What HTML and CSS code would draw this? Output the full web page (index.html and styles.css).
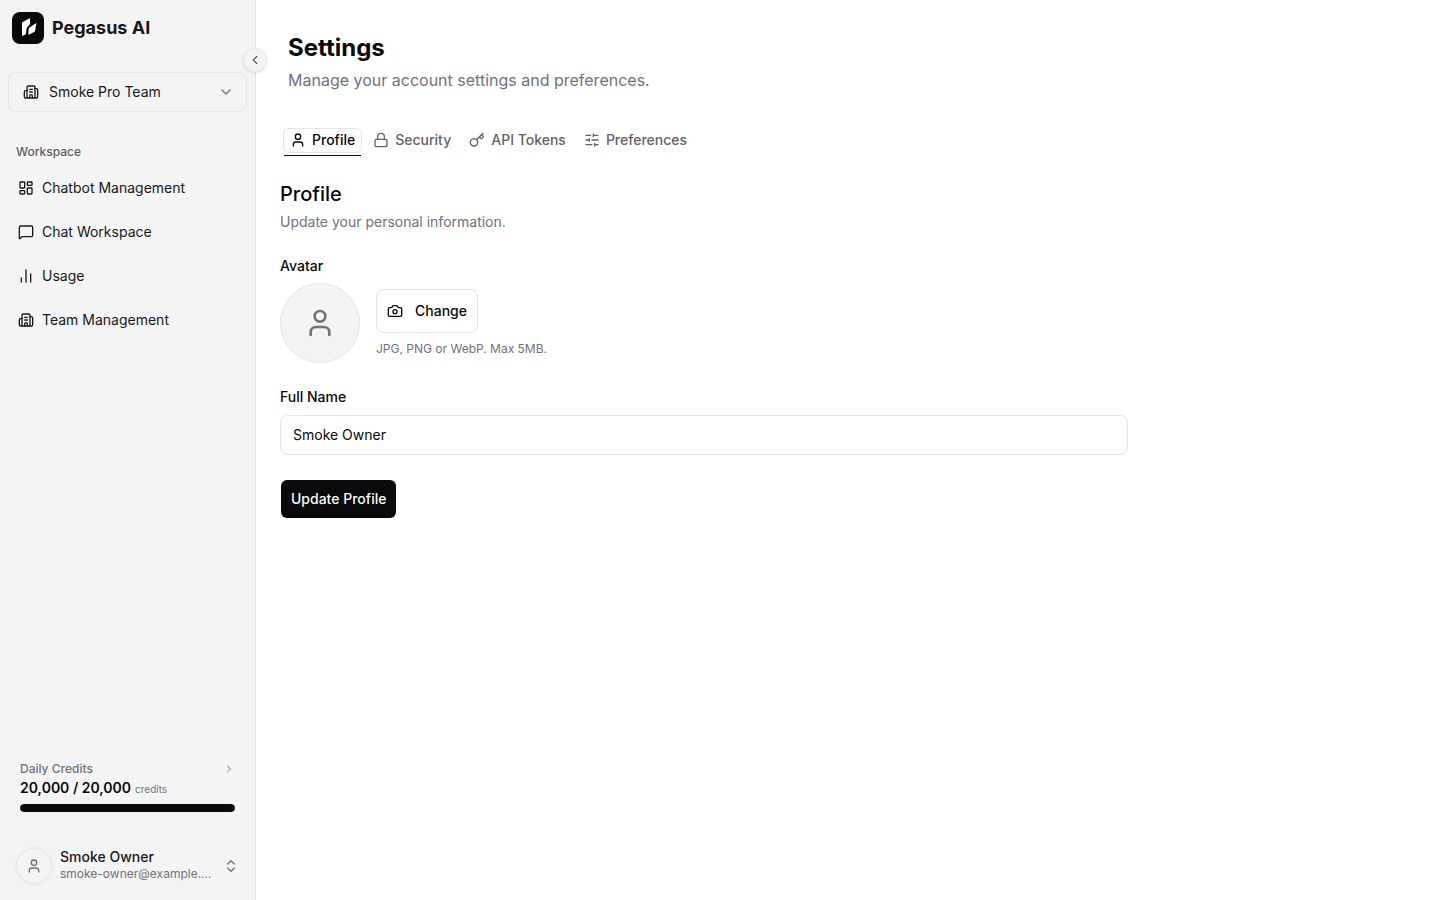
FILE: index.html
```html
<!DOCTYPE html>
<html lang="en">
<head>
<meta charset="utf-8">
<meta name="viewport" content="width=device-width, initial-scale=1">
<title>Settings - Pegasus AI</title>
<link rel="stylesheet" href="styles.css">
</head>
<body>
<svg class="sprite" aria-hidden="true">
  <symbol id="person" viewBox="0 0 24 24"><path d="M19 21v-2a4 4 0 0 0-4-4H9a4 4 0 0 0-4 4v2"/><circle cx="12" cy="7" r="4"/></symbol>
  <symbol id="building" viewBox="0 0 24 24"><path d="M10 12h4M10 8h4M14 21v-3a2 2 0 0 0-4 0v3"/><path d="M6 10H4a2 2 0 0 0-2 2v7a2 2 0 0 0 2 2h16a2 2 0 0 0 2-2V9a2 2 0 0 0-2-2h-2"/><path d="M6 21V5a2 2 0 0 1 2-2h8a2 2 0 0 1 2 2v16"/></symbol>
</svg>
<div class="app">
  <aside class="sidebar">
    <button class="collapse" type="button" aria-label="Collapse sidebar"><svg class="icon icon-sm" viewBox="0 0 24 24"><path d="m15 18-6-6 6-6"/></svg></button>
    <div class="brand">
      <svg class="logo" viewBox="0 0 32 32" aria-hidden="true"><rect width="32" height="32" rx="8" fill="#09090b"/><path d="M10 10.4 18 6v6l-3.300 4L13.700 22.600 10 24Z" fill="#fff"/><path d="M24.400 11 23 19.400 16.300 23l.5-7Z" fill="#fff"/></svg>
      <span>Pegasus AI</span>
    </div>
    <button class="team" type="button">
      <svg class="icon"><use href="#building"/></svg>
      <span>Smoke Pro Team</span>
      <svg class="icon muted end" viewBox="0 0 24 24"><path d="m6 9 6 6 6-6"/></svg>
    </button>
    <nav class="nav" aria-labelledby="nav-title">
      <h2 class="nav-title" id="nav-title">Workspace</h2>
      <a class="nav-link" href="#chatbots"><svg class="icon" viewBox="0 0 24 24"><rect width="7" height="9" x="3" y="3" rx="1"/><rect width="7" height="5" x="14" y="3" rx="1"/><rect width="7" height="9" x="14" y="12" rx="1"/><rect width="7" height="5" x="3" y="16" rx="1"/></svg>Chatbot Management</a>
      <a class="nav-link" href="#chat"><svg class="icon" viewBox="0 0 24 24"><path d="M22 17a2 2 0 0 1-2 2H6.800a2 2 0 0 0-1.400.6l-2.200 2.200A.7.7 0 0 1 2 21.300V5a2 2 0 0 1 2-2h16a2 2 0 0 1 2 2z"/></svg>Chat Workspace</a>
      <a class="nav-link" href="#usage"><svg class="icon" viewBox="0 0 24 24"><path d="M5 21v-6M12 21V3M19 21V9"/></svg>Usage</a>
      <a class="nav-link" href="#team"><svg class="icon"><use href="#building"/></svg>Team Management</a>
    </nav>
    <a class="credits" href="#credits">
      <span class="credits-head" id="credits-label">Daily Credits<svg class="icon icon-xs" viewBox="0 0 24 24"><path d="m9 18 6-6-6-6"/></svg></span>
      <span class="credits-value"><strong>20,000 / 20,000</strong> <small>credits</small></span>
      <span class="meter" role="progressbar" aria-labelledby="credits-label" aria-valuemin="0" aria-valuemax="20000" aria-valuenow="20000"><span class="meter-fill" style="width: 100%"></span></span>
    </a>
    <button class="account" type="button">
      <span class="account-avatar"><svg class="icon muted"><use href="#person"/></svg></span>
      <span class="account-text"><span class="account-name">Smoke Owner</span><span class="account-mail">smoke-owner@example.…</span></span>
      <svg class="icon muted" viewBox="0 0 24 24"><path d="m7 15 5 5 5-5M7 9l5-5 5 5"/></svg>
    </button>
  </aside>
  <main class="main">
    <header class="page-head">
      <h1>Settings</h1>
      <p>Manage your account settings and preferences.</p>
    </header>
    <div class="tabs" role="tablist">
      <button class="tab active" type="button" role="tab" aria-selected="true"><svg class="icon"><use href="#person"/></svg>Profile</button>
      <button class="tab" type="button" role="tab" aria-selected="false"><svg class="icon" viewBox="0 0 24 24"><rect width="18" height="11" x="3" y="11" rx="2"/><path d="M7 11V7a5 5 0 0 1 10 0v4"/></svg>Security</button>
      <button class="tab" type="button" role="tab" aria-selected="false"><svg class="icon" viewBox="0 0 24 24"><path d="m15.500 7.500 2.300 2.300a1 1 0 0 0 1.400 0l2.100-2.100a1 1 0 0 0 0-1.400L19 4M21 2l-9.600 9.600"/><circle cx="7.500" cy="15.500" r="5.500"/></svg>API Tokens</button>
      <button class="tab" type="button" role="tab" aria-selected="false"><svg class="icon" viewBox="0 0 24 24"><path d="M10 5H3M12 19H3M14 3v4M16 17v4M21 12h-9M21 19h-5M21 5h-7M8 10v4M8 12H3"/></svg>Preferences</button>
    </div>
    <form class="profile">
      <h2>Profile</h2>
      <p class="lead">Update your personal information.</p>
      <h3 class="label">Avatar</h3>
      <div class="avatar-row">
        <div class="avatar"><svg class="icon icon-lg muted"><use href="#person"/></svg></div>
        <div class="avatar-side">
          <button class="change" type="button"><svg class="icon" viewBox="0 0 24 24"><path d="M14 4a2 2 0 0 1 1.760 1.050l.486.9A2 2 0 0 0 18 7h2a2 2 0 0 1 2 2v9a2 2 0 0 1-2 2H4a2 2 0 0 1-2-2V9a2 2 0 0 1 2-2h2a2 2 0 0 0 1.760-1.050l.489-.904A2 2 0 0 1 10 4z"/><circle cx="12" cy="13" r="3"/></svg>Change</button>
          <p class="hint">JPG, PNG or WebP. Max 5MB.</p>
        </div>
      </div>
      <label class="label" for="full-name">Full Name</label>
      <input class="input" id="full-name" type="text" value="Smoke Owner">
      <button class="submit" type="submit">Update Profile</button>
    </form>
  </main>
</div>
</body>
</html>
```
FILE: styles.css
```css
* { box-sizing: border-box; }
body { margin: 0; font: 14px/20px Inter, "Liberation Sans", sans-serif; color: #09090b; background: #fff; }
h1, h2, h3, p { margin: 0; }
button, input { font: inherit; color: inherit; }
button { cursor: pointer; }
a { color: inherit; text-decoration: none; }
.sprite { display: none; }
.icon { width: 16px; height: 16px; flex: none; fill: none; stroke: currentColor; stroke-width: 2; stroke-linecap: round; stroke-linejoin: round; }
.icon-xs { width: 12px; height: 12px; }
.icon-sm { width: 14px; height: 14px; }
.icon-lg { width: 32px; height: 32px; }
.muted { color: #71717a; }
.end { margin-left: auto; }

.app { display: flex; min-height: 100vh; }
.sidebar { position: relative; display: flex; flex-direction: column; flex: none; width: 256px; padding: 12px 8px; background: #f4f4f4; border-right: 1px solid #e4e4e4; color: #18181b; }
.collapse { position: absolute; top: 48px; right: -12px; display: flex; align-items: center; justify-content: center; width: 24px; height: 24px; padding: 0; border: 1px solid #e8e8e8; border-radius: 50%; background: #f4f4f4; color: #52525b; box-shadow: 0 1px 3px rgb(0 0 0 / 12%); }
.brand { display: flex; align-items: center; gap: 8px; padding: 0 4px; font-size: 18px; line-height: 32px; font-weight: 700; }
.logo { width: 32px; height: 32px; }
.team { display: flex; align-items: center; gap: 10px; height: 40px; margin: 28px 0 30px; padding: 0 12px 0 14px; border: 1px solid #e4e4e4; border-radius: 8px; background: none; }
.nav { display: flex; flex-direction: column; gap: 8px; }
.nav-title { padding: 0 8px; font-size: 12px; line-height: 20px; font-weight: 500; color: #5c5c62; }
.nav-link { display: flex; align-items: center; gap: 8px; height: 36px; padding: 0 10px; border-radius: 8px; }
.credits { display: flex; flex-direction: column; margin-top: auto; padding: 0 12px; color: #71717a; }
.credits-head { display: flex; align-items: center; justify-content: space-between; font-size: 12px; line-height: 18px; font-weight: 500; }
.credits-value { line-height: 20px; }
.credits-value strong { font-weight: 600; color: #09090b; }
.credits-value small { font-size: 10px; }
.meter { height: 8px; margin-top: 5px; border-radius: 4px; background: #e4e4e7; overflow: hidden; }
.meter-fill { display: block; height: 100%; background: #09090b; border-radius: 4px; }
.account { display: flex; align-items: center; gap: 8px; margin-top: 32px; padding: 4px 8px; border: 0; background: none; text-align: left; }
.account-avatar { display: flex; align-items: center; justify-content: center; width: 36px; height: 36px; border: 1px solid #e8e8e8; border-radius: 50%; box-shadow: 0 0 3px rgb(0 0 0 / 8%); }
.account-text { flex: 1; min-width: 0; padding-bottom: 2px; }
.account-name, .account-mail { display: block; overflow: hidden; text-overflow: ellipsis; white-space: nowrap; }
.account-name { line-height: 18px; font-weight: 500; }
.account-mail { font-size: 12px; line-height: 16px; color: #71717a; }

.main { flex: 1; min-width: 0; padding: 32px 24px; }
.page-head { padding: 0 8px; }
.page-head h1 { font-size: 24px; line-height: 32px; font-weight: 700; }
.page-head p { margin-top: 4px; font-size: 16px; line-height: 24px; color: #71717a; }
.tabs { display: flex; gap: 4px; margin: 36px 3px 0; }
.tab { position: relative; display: flex; align-items: center; gap: 6px; height: 25px; padding: 0 6px 1px; border: 1px solid transparent; border-radius: 6px; background: none; font-weight: 500; color: #626264; }
.active { border-color: #e4e4e4; color: #09090b; }
.active::after { content: ""; position: absolute; left: 0; right: 0; bottom: -4px; height: 1px; background: #09090b; }
.profile { max-width: 848px; margin-top: 27px; }
.profile h2 { font-size: 20px; line-height: 28px; font-weight: 500; }
.lead { margin-top: 4px; color: #71717a; }
.label { display: block; margin-top: 24px; font-size: 14px; line-height: 20px; font-weight: 500; }
.avatar-row { display: flex; align-items: center; gap: 16px; margin-top: 7px; }
.avatar { display: flex; align-items: center; justify-content: center; width: 80px; height: 80px; border: 1px solid #e4e4e4; border-radius: 50%; background: #f4f4f4; }
.change { display: flex; align-items: center; gap: 12px; height: 44px; padding: 0 10px; border: 1px solid #e4e4e4; border-radius: 8px; background: #fff; font-weight: 500; }
.hint { margin-top: 8px; font-size: 12px; line-height: 16px; color: #71717a; }
.input { display: block; width: 100%; height: 40px; margin-top: 8px; padding: 0 12px 2px; border: 1px solid #e4e4e4; border-radius: 8px; background: #fff; }
.submit { height: 38px; margin: 25px 1px 0; padding: 0 10px; border: 0; border-radius: 6px; background: #09090b; color: #fafafa; font-weight: 500; }
```
